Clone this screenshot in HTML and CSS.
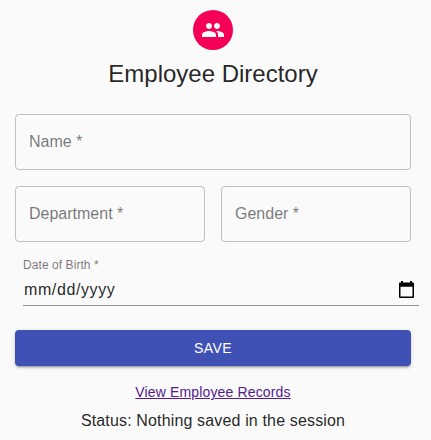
FILE: index.html
```html
<!DOCTYPE html>
<html lang="en">
<head>
<meta charset="utf-8">
<title>Employee Directory</title>
<link rel="stylesheet" href="styles.css">
</head>
<body>
<main class="page">
  <div class="avatar">
    <svg viewBox="0 0 24 24" width="24" height="24" fill="currentColor"><path d="M16 11c1.66 0 2.99-1.34 2.99-3S17.66 5 16 5c-1.66 0-3 1.34-3 3s1.34 3 3 3zm-8 0c1.66 0 2.99-1.34 2.99-3S9.66 5 8 5C6.34 5 5 6.34 5 8s1.34 3 3 3zm0 2c-2.33 0-7 1.17-7 3.5V19h14v-2.5c0-2.33-4.67-3.5-7-3.5zm8 0c-.29 0-.62.02-.97.05 1.16.84 1.97 1.97 1.97 3.45V19h6v-2.5c0-2.33-4.67-3.5-7-3.5z"/></svg>
  </div>
  <h1 class="title"><span>Employee Directory</span></h1>
  <form class="form">
    <div class="field wide"><span>Name *</span></div>
    <div class="field"><span>Department *</span></div>
    <div class="field"><span>Gender *</span></div>
    <div class="date">
      <div class="date-label"><span>Date of Birth *</span></div>
      <div class="date-input"><span class="date-text">mm/dd/yyyy</span>
        <svg viewBox="0 0 15 17" width="15" height="17"><path fill-rule="evenodd" d="M2 0h2v1.500h7V0h2v1.500h1Q15 1.500 15 2.500V16Q15 17 14 17H1Q0 17 0 16V2.500Q0 1.500 1 1.500H2zM1.500 5.700V15.500h12V5.700z"/></svg>
      </div>
    </div>
    <button class="save wide" type="button"><span>SAVE</span></button>
  </form>
  <a class="link" href="#">View Employee Records</a>
  <p class="status"><span>Status: Nothing saved in the session</span></p>
</main>
</body>
</html>
```
FILE: styles.css
```css
* { box-sizing: border-box; }
body {
  margin: 0;
  background: #fafafa;
  color: rgba(0, 0, 0, .87);
  font-family: "Liberation Sans", Arial, sans-serif;
}
.page {
  height: 440px;
  padding: 10px 20px 0 15px;
  display: flex;
  flex-direction: column;
  align-items: center;
}
.avatar {
  width: 40px;
  height: 40px;
  border-radius: 50%;
  background: #f50057;
  color: #fafafa;
  display: flex;
  align-items: center;
  justify-content: center;
}
.title {
  margin: 8px 0 0;
  font-size: 24px;
  font-weight: 400;
  line-height: 32px;
}
.form {
  width: 396px;
  margin-top: 24px;
  display: grid;
  grid-template-columns: repeat(2, minmax(0, 1fr));
  gap: 16px;
}
.wide { grid-column: 1 / -1; }
.field {
  height: 56px;
  padding: 0 13px;
  border: 1px solid rgba(0, 0, 0, .23);
  border-radius: 4px;
  color: rgba(0, 0, 0, .54);
  font-size: 16px;
  line-height: 54px;
}
.date {
  grid-column: 1 / -1;
  height: 48px;
  width: 396px;
  margin-left: 8px;
  border-bottom: 1px solid rgba(0, 0, 0, .42);
}
.date-label {
  height: 16px;
  color: rgba(0, 0, 0, .54);
  font-size: 12px;
  line-height: 14px;
  letter-spacing: .07px;
}
.date-input {
  height: 31px;
  padding: 0 5px 0 1px;
  display: flex;
  align-items: center;
  justify-content: space-between;
  font-size: 16px;
}
.date-text { letter-spacing: .6px; }
.save {
  height: 36px;
  margin-top: 8px;
  border: 0;
  border-radius: 4px;
  background: #3f51b5;
  color: #fff;
  font: 14px/24px "Liberation Sans", Arial, sans-serif;
  letter-spacing: .4px;
  box-shadow: 0 3px 1px -2px rgba(0,0,0,.2), 0 2px 2px 0 rgba(0,0,0,.14), 0 1px 5px 0 rgba(0,0,0,.12);
}
.link {
  margin-top: 16px;
  color: #551a8b;
  font-size: 14px;
  line-height: 20px;
  letter-spacing: .15px;
}
.status {
  margin: 7px 0 0;
  font-size: 16px;
  line-height: 24px;
  letter-spacing: .15px;
}
```
